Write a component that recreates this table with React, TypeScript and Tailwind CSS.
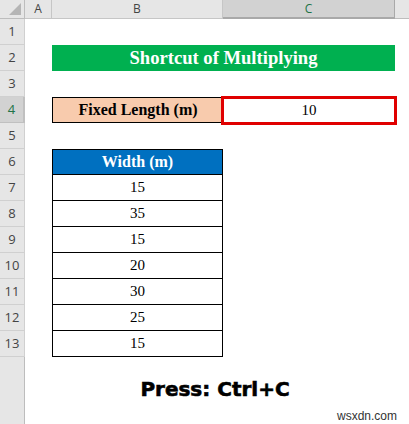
import React from "react";

const rowHdr =
  "col-start-1 bg-[#e6e6e6] text-[#444] border-r border-[#bdbdbd] border-b border-[#d0d0d0] flex items-end justify-center pb-[3px] text-[13px]";
const rowHdrSel =
  "col-start-1 bg-[#d2d2d2] text-[#217346] border-r-2 border-[#217346] border-b border-[#c0c0c0] flex items-end justify-center pb-[3px] text-[13px]";
const serif = "font-['Liberation_Serif','Times_New_Roman',serif]";
const cell = `col-start-3 border border-t-0 border-black text-black text-[15px] flex items-center justify-center ${serif}`;

export default function App() {
  return (
    <div className="w-[409px] h-[424px] bg-white overflow-hidden font-['Open_Sans','Liberation_Sans',sans-serif]">
      <div className="grid grid-cols-[25px_27px_171px_172px_14px] grid-rows-[19px_repeat(13,26px)_67px]">
        {/* Header row */}
        <div className="col-start-1 row-start-1 bg-[#e6e6e6] border-r border-[#bdbdbd] border-b border-[#bdbdbd] flex items-end justify-end p-[3px]">
          <div className="w-0 h-0 border-l-[12px] border-l-transparent border-b-[12px] border-b-[#b5b5b5]" />
        </div>
        <div className="col-start-2 row-start-1 bg-[#e6e6e6] text-[#444] flex items-center justify-center text-[12px] border-r border-[#c6c6c6] border-b border-[#bdbdbd]">A</div>
        <div className="col-start-3 row-start-1 bg-[#e6e6e6] text-[#444] flex items-center justify-center text-[12px] border-r border-[#c6c6c6] border-b border-[#bdbdbd]">B</div>
        <div className="col-start-4 row-start-1 bg-[#d2d2d2] text-[#217346] flex items-center justify-center text-[12px] border-r border-[#a9a9a9] border-b-2 border-[#217346]">C</div>
        <div className="col-start-5 row-start-1 bg-[#e6e6e6] border-b border-[#bdbdbd]" />

        {/* Row headers */}
        <div className={`${rowHdr} row-start-2`}>1</div>
        <div className={`${rowHdr} row-start-3`}>2</div>
        <div className={`${rowHdr} row-start-4`}>3</div>
        <div className={`${rowHdrSel} row-start-5`}>4</div>
        <div className={`${rowHdr} row-start-6`}>5</div>
        <div className={`${rowHdr} row-start-7`}>6</div>
        <div className={`${rowHdr} row-start-8`}>7</div>
        <div className={`${rowHdr} row-start-9`}>8</div>
        <div className={`${rowHdr} row-start-10`}>9</div>
        <div className={`${rowHdr} row-start-11`}>10</div>
        <div className={`${rowHdr} row-start-12`}>11</div>
        <div className={`${rowHdr} row-start-13`}>12</div>
        <div className={`${rowHdr} row-start-14`}>13</div>
        <div className="col-start-1 row-start-15 bg-[#e6e6e6] border-r border-[#bdbdbd]" />

        {/* Title */}
        <div className={`col-start-3 col-span-2 row-start-3 bg-[#00b050] text-white font-bold text-[18.6px] flex items-center justify-center ${serif}`}>
          Shortcut of Multiplying
        </div>

        {/* Fixed length */}
        <div className={`col-start-3 row-start-5 -mr-px bg-[#f8cbad] border border-black text-black font-bold text-[16px] flex items-center justify-center ${serif}`}>
          Fixed Length (m)
        </div>
        <div className={`col-start-4 row-start-5 border-[3px] border-[#e00000] -ml-[2px] -mr-[2px] -mt-[1px] -mb-[2px] flex items-center justify-center text-[15px] text-black ${serif}`}>
          10
        </div>

        {/* Width table */}
        <div className={`col-start-3 row-start-7 bg-[#0070c0] border border-black text-white font-bold text-[16px] flex items-center justify-center ${serif}`}>
          Width (m)
        </div>
        <div className={`${cell} row-start-8`}>15</div>
        <div className={`${cell} row-start-9`}>35</div>
        <div className={`${cell} row-start-10`}>15</div>
        <div className={`${cell} row-start-11`}>20</div>
        <div className={`${cell} row-start-12`}>30</div>
        <div className={`${cell} row-start-13`}>25</div>
        <div className={`${cell} row-start-14`}>15</div>

        {/* Bottom */}
        <div className="col-start-2 col-span-4 row-start-15 flex flex-col">
          <div className="text-black font-bold text-[20px] leading-none text-center pt-[22px] pr-[4px] font-['DejaVu_Sans',sans-serif] [-webkit-text-stroke:0.6px_black]">
            Press: Ctrl+C
          </div>
          <div className="text-[#333] text-[12px] leading-none text-right pr-[12px] mt-[11px] font-['Liberation_Sans',Arial,sans-serif]">
            wsxdn.com
          </div>
        </div>
      </div>
    </div>
  );
}
